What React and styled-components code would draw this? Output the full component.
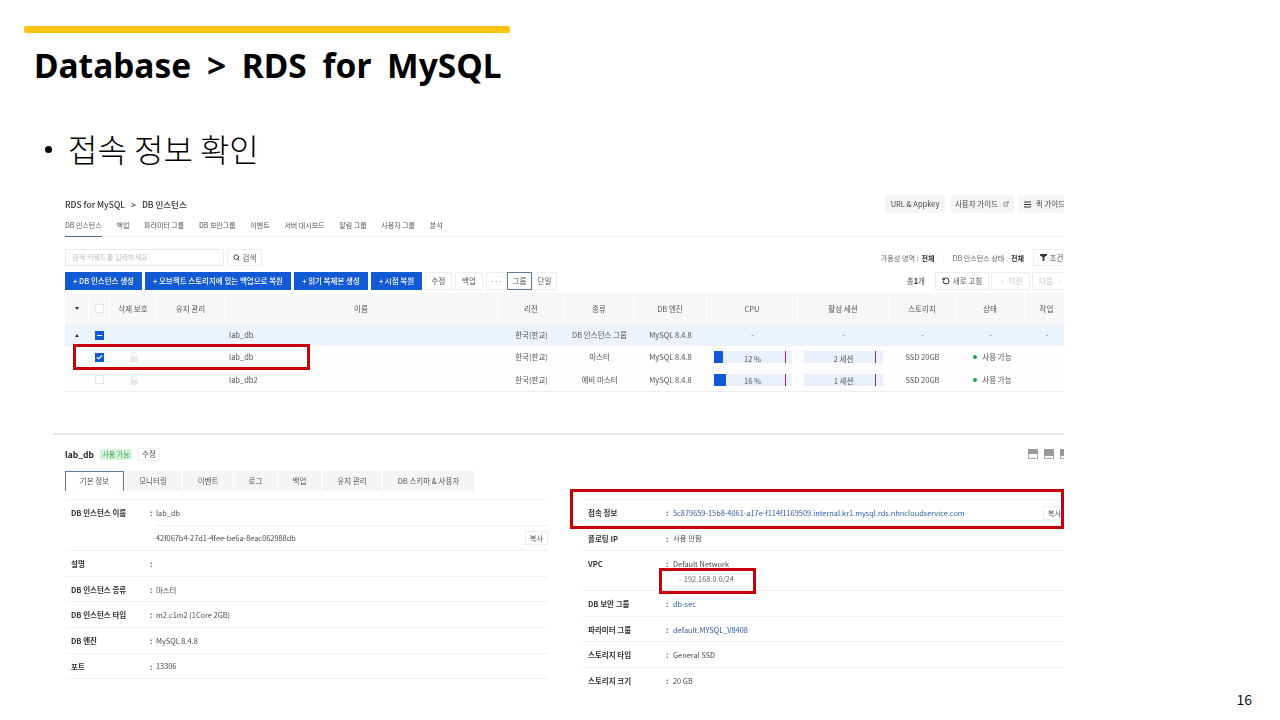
import React from 'react';
import styled, { createGlobalStyle } from 'styled-components';
import { Search, RotateCcw, ExternalLink, ChevronLeft, ChevronRight, Check, Minus } from 'lucide-react';

const GlobalStyle = createGlobalStyle`
  html, body {
    margin: 0;
    background: #fff;
  }
  * {
    box-sizing: border-box;
  }
`;

const KR = `"Noto Sans CJK KR", "Noto Sans", sans-serif`;

const Slide = styled.div`
  width: 1280px;
  height: 720px;
  overflow: hidden;
  display: flex;
  flex-direction: column;
  background: #fff;
  color: #000;
  font-family: ${KR};
`;

const AccentBar = styled.div`
  width: 486px;
  height: 7px;
  margin: 26px 0 0 24px;
  border-radius: 2px;
  background: #fdc20f;
`;

const Title = styled.h1`
  margin: 7px 0 0 34px;
  font-family: "Noto Sans", sans-serif;
  font-size: 33.5px;
  font-weight: 700;
  line-height: 50px;
  word-spacing: 7px;
  white-space: nowrap;
`;

const Bullet = styled.div`
  display: flex;
  align-items: center;
  margin: 36px 0 0 45px;
  height: 44px;
  font-size: 32px;
  font-weight: 300;
  gap: 16px;
  white-space: nowrap;
`;

const Dot = styled.span`
  width: 7px;
  height: 7px;
  border-radius: 50%;
  background: #000;
  margin-top: 2px;
`;

const Shot = styled.div`
  position: relative;
  width: 1011px;
  height: 498px;
  margin: 20px 0 0 53px;
  overflow: hidden;
  font-size: 7.5px;
  line-height: 12px;
  color: #555;
  filter: blur(0.4px);
`;

const PageNumber = styled.div`
  margin: 1px 28px 0 0;
  text-align: right;
  font-size: 14px;
  line-height: 20px;
  color: #111;
`;

const Console = styled.div`
  width: 1017px;
  padding: 5px 0 0 12px;
`;

const SpaceBetween = styled.div`
  display: flex;
  justify-content: space-between;
  align-items: center;
  height: ${p => p.$h || 18}px;
  margin-top: ${p => p.$mt || 0}px;
`;

const Breadcrumb = styled.div`
  display: flex;
  gap: 6px;
  font-size: 8.5px;
  font-weight: 500;
  color: #333;
`;

const Row = styled.div`
  display: flex;
  align-items: center;
  gap: ${p => p.$gap ?? 3}px;
`;

const GuideButton = styled.div`
  display: flex;
  align-items: center;
  justify-content: center;
  gap: 5px;
  width: ${p => p.$w}px;
  height: 18px;
  margin-left: ${p => p.$ml || 0}px;
  background: #f5f5f5;
  border-radius: 2px;
  color: #444;
`;

const NavTabs = styled.div`
  display: flex;
  gap: 14.7px;
  height: 19px;
  margin-top: 5px;
  font-size: 7px;
  border-bottom: 1px solid #f3f3f3;
`;

const NavTab = styled.div`
  height: 19px;
  line-height: 14px;
  color: #555;
  border-bottom: 1px solid ${p => (p.$active ? '#4d6f96' : 'transparent')};
`;

const SearchInput = styled.div`
  width: 159px;
  height: 17px;
  padding-left: 6px;
  border: 1px solid #eaeaea;
  font-size: 7.2px;
  line-height: 15px;
  color: #bbb;
`;

const Button = styled.div`
  display: flex;
  align-items: center;
  justify-content: center;
  gap: 3px;
  flex-shrink: 0;
  width: ${p => p.$w}px;
  height: ${p => p.$h || 18}px;
  margin-left: ${p => p.$ml || 0}px;
  background: #fff;
  border: 1px solid ${p => (p.$active ? '#5a7ba3' : '#eeeeee')};
  color: ${p => (p.$disabled ? '#c4c4c4' : '#555')};
`;

const PrimaryButton = styled.div`
  display: flex;
  align-items: center;
  justify-content: center;
  gap: 4px;
  width: ${p => p.$w}px;
  height: 18px;
  background: #1259d6;
  color: #fff;
  font-weight: 500;
`;

const FilterText = styled.div`
  display: flex;
  gap: 3px;
  font-size: 7.1px;
  color: #666;
  margin-right: 9px;
`;

const Strong = styled.b`
  color: #333;
  font-weight: 700;
`;

const Sep = styled.span`
  margin: 0 5px;
  color: #e4e4e4;
`;

const Count = styled.div`
  margin-right: 8px;
  color: #555;
`;

const Table = styled.div`
  margin-top: 3px;
  border-bottom: 1px solid #eeeeee;
`;

const TableRow = styled.div`
  display: grid;
  grid-template-columns: 24px 21px 47px 68px 273px 67px 69px 73px 91px 91px 67px 69px 44px;
  height: ${p => (p.$head ? 31 : 22.33)}px;
  background: ${p => p.$bg || '#fdfdfd'};
`;

const Cell = styled.div`
  display: flex;
  align-items: center;
  justify-content: ${p => (p.$left ? 'flex-start' : 'center')};
  padding-left: ${p => (p.$left ? 4 : 0)}px;
  border-right: ${p => (p.$head ? '1px solid #fff' : 'none')};
  white-space: nowrap;
  color: #555;
`;

const StatusCell = styled(Cell)`
  padding-left: 4px;
`;

const Caret = styled.span`
  width: 0;
  height: 0;
  border-left: 2.5px solid transparent;
  border-right: 2.5px solid transparent;
  border-top: ${p => (p.$up ? 'none' : '3px solid #333')};
  border-bottom: ${p => (p.$up ? '3px solid #333' : 'none')};
`;

const CheckBox = styled.span`
  display: flex;
  align-items: center;
  justify-content: center;
  width: 9px;
  height: 9px;
  background: ${p => (p.$on ? '#1259d6' : '#fff')};
  border: 1px solid ${p => (p.$on ? '#1259d6' : '#e6e6e6')};
  color: #fff;
`;

const Gauge = styled.div`
  position: relative;
  width: ${p => p.$w}px;
  height: 12px;
  display: flex;
  align-items: center;
  justify-content: center;
  background: #e9f0fb;
  color: #555;
`;

const GaugeFill = styled.span`
  position: absolute;
  left: 0;
  top: 0;
  bottom: 0;
  background: #1259d6;
`;

const GaugeMark = styled.span`
  position: absolute;
  top: 0;
  bottom: 0;
  left: 71px;
  width: 1px;
  background: #9c3046;
`;

const GaugeLabel = styled.span`
  margin-top: 3px;
`;

const StatusDot = styled.span`
  width: 4px;
  height: 4px;
  border-radius: 50%;
  background: #1f9d4d;
  margin-right: 5px;
`;

const Detail = styled.div`
  width: 1017px;
  margin-top: 41px;
  padding: 13px 0 0 12px;
  border-top: 2px solid #e6e6e6;
`;

const InstanceName = styled.div`
  font-size: 8.5px;
  font-weight: 700;
  color: #222;
  width: 35px;
`;

const Badge = styled.div`
  width: 32px;
  height: 11px;
  margin-right: 6px;
  line-height: 11px;
  text-align: center;
  font-size: 7.1px;
  background: #d9f2dd;
  color: #35a853;
`;

const WindowIcon = styled.svg`
  display: block;
  width: 10px;
  height: 10px;
`;

const DetailTabs = styled.div`
  display: flex;
  margin-top: 10px;
  height: 20px;
`;

const DetailTab = styled.div`
  display: flex;
  align-items: center;
  justify-content: center;
  width: ${p => p.$w}px;
  margin-right: ${p => p.$mr || 0}px;
  background: ${p => (p.$active ? '#fff' : '#f5f5f5')};
  border: ${p => (p.$active ? '1px solid #5a7ba3' : 'none')};
  border-bottom: none;
  color: #555;
`;

const Columns = styled.div`
  display: flex;
  gap: 35px;
  margin-top: 8px;
  align-items: flex-start;
`;

const Column = styled.div`
  flex-shrink: 0;
  width: ${p => p.$w}px;
`;

const Field = styled.div`
  display: grid;
  grid-template-columns: ${p => p.$label}px ${p => p.$colon}px 1fr;
  border-top: 1px solid ${p => (p.$noRule ? 'transparent' : '#f2f2f2')};
  border-bottom: ${p => (p.$last ? '1px solid #f2f2f2' : 'none')};
  min-height: 25.6px;
`;

const FieldLabel = styled.div`
  padding-left: ${p => p.$pad}px;
  height: 24.6px;
  line-height: 26px;
  font-weight: 700;
  color: #333;
`;

const FieldColon = styled.div`
  height: 24.6px;
  line-height: 26px;
  font-weight: 700;
  color: #555;
`;

const FieldValue = styled.div`
  display: flex;
  justify-content: space-between;
  align-items: ${p => (p.$stack ? 'flex-start' : 'center')};
  flex-direction: ${p => (p.$stack ? 'column' : 'row')};
  height: ${p => (p.$stack ? 'auto' : '24.6px')};
  padding-top: ${p => (p.$stack ? 0 : 1)}px;
  font-size: 7.38px;
  box-shadow: ${p => (p.$rule ? '0 -1px 0 #f2f2f2' : 'none')};
  color: ${p => (p.$link ? '#2a5aa8' : '#4a4a4a')};
  white-space: nowrap;
`;

const StackLine = styled.div`
  height: 24px;
  line-height: 26px;
`;

const SubLine = styled.div`
  line-height: 8px;
  padding: 0 0 7px 5px;
  color: #666;
`;

const CopyButton = styled.div`
  flex-shrink: 0;
  width: 23px;
  height: 14px;
  line-height: 12px;
  text-align: center;
  border: 1px solid #eeeeee;
  color: #555;
`;

const RedBox = styled.div`
  position: absolute;
  left: ${p => p.$left}px;
  top: ${p => p.$top}px;
  width: ${p => p.$w}px;
  height: ${p => p.$h}px;
  border: 3px solid #c8000a;
`;

const tabs = ['DB 인스턴스', '백업', '파라미터 그룹', 'DB 보안그룹', '이벤트', '서버 대시보드', '알림 그룹', '사용자 그룹', '분석'];
const headers = ['삭제 보호', '유지 관리', '이름', '리전', '종류', 'DB 엔진', 'CPU', '활성 세션', '스토리지', '상태', '작업'];
const detailTabs = [
  ['기본 정보', 59, 1],
  ['모니터링', 56, 2],
  ['이벤트', 50, 1],
  ['로그', 43, 1],
  ['백업', 43, 2],
  ['유지 관리', 58, 2],
  ['DB 스키마 & 사용자', 91, 0],
];

const LockIcon = () => (
  <svg width="8" height="10" viewBox="0 0 8 10">
    <path d="M2 5V2.6a2 2 0 0 1 4 0" fill="none" stroke="#e8e8e8" strokeWidth="1.2" />
    <rect x="0.5" y="4.5" width="7" height="5.5" fill="#e8e8e8" />
  </svg>
);

const PaneIcon = ({ fill }) => (
  <WindowIcon viewBox="0 0 10 10">
    <rect x="0.5" y="0.5" width="9" height="9" fill="#fff" stroke="#aaa" />
    <rect x="0" y="0" width="10" height={fill} fill="#999" />
  </WindowIcon>
);

const SidePaneIcon = () => (
  <WindowIcon viewBox="0 0 10 10">
    <rect x="0.5" y="0.5" width="9" height="9" fill="#fff" stroke="#aaa" />
    <rect x="0" y="0" width="4" height="7" fill="#999" />
  </WindowIcon>
);

const MenuIcon = () => (
  <svg width="7" height="7" viewBox="0 0 7 7">
    <path d="M0 1h7M0 3.5h7M0 6h7" stroke="#333" strokeWidth="1" />
  </svg>
);

const FunnelIcon = () => (
  <svg width="7" height="7" viewBox="0 0 7 7">
    <path d="M0 0h7v1.4L4.4 3V7H2.6V3L0 1.4z" fill="#333" />
  </svg>
);

const InstanceRow = ({ name, kind, checked, cpu, session }) => (
  <TableRow>
    <Cell />
    <Cell>
      <CheckBox $on={checked}>{checked && <Check size={7} strokeWidth={4} />}</CheckBox>
    </Cell>
    <Cell><LockIcon /></Cell>
    <Cell />
    <Cell $left>{name}</Cell>
    <Cell>한국(판교)</Cell>
    <Cell>{kind}</Cell>
    <Cell>MySQL 8.4.8</Cell>
    <Cell>
      <Gauge $w={78}>
        <GaugeFill style={{ width: cpu + '%' }} />
        <GaugeMark />
        <GaugeLabel>{cpu} %</GaugeLabel>
      </Gauge>
    </Cell>
    <Cell>
      <Gauge $w={79}>
        <GaugeMark />
        <GaugeLabel>{session} 세션</GaugeLabel>
      </Gauge>
    </Cell>
    <Cell>SSD 20GB</Cell>
    <StatusCell><StatusDot />사용 가능</StatusCell>
    <Cell />
  </TableRow>
);

const App = () => (
  <Slide>
    <GlobalStyle />
    <AccentBar />
    <Title>Database &gt; RDS for MySQL</Title>
    <Bullet>
      <Dot />
      <span>접속 정보 확인</span>
    </Bullet>

    <Shot>
      <Console>
        <SpaceBetween>
          <Breadcrumb>
            <span>RDS for MySQL</span>
            <span>&gt;</span>
            <span>DB 인스턴스</span>
          </Breadcrumb>
          <Row $gap={0}>
            <GuideButton $w={60}>URL &amp; Appkey</GuideButton>
            <GuideButton $w={64} $ml={5}>사용자 가이드 <ExternalLink size={6} /></GuideButton>
            <GuideButton $w={51} $ml={5}><MenuIcon /> 퀵 가이드</GuideButton>
          </Row>
        </SpaceBetween>

        <NavTabs>
          {tabs.map((t, i) => (
            <NavTab key={t} $active={i === 0}>{t}</NavTab>
          ))}
        </NavTabs>

        <SpaceBetween $h={17} $mt={12}>
          <Row>
            <SearchInput>검색 키워드를 입력하세요.</SearchInput>
            <Button $w={35} $h={17}><Search size={7} strokeWidth={3} color="#333" /> 검색</Button>
          </Row>
          <Row $gap={0}>
            <FilterText>
              가용성 영역 : <Strong>전체</Strong><Sep>|</Sep>DB 인스턴스 상태 : <Strong>전체</Strong>
            </FilterText>
            <Button $w={37} $h={17}><FunnelIcon /> 조건</Button>
          </Row>
        </SpaceBetween>

        <SpaceBetween $mt={6}>
          <Row>
            <PrimaryButton $w={77}>+ DB 인스턴스 생성</PrimaryButton>
            <PrimaryButton $w={146}>+ 오브젝트 스토리지에 있는 백업으로 복원</PrimaryButton>
            <PrimaryButton $w={74}>+ 읽기 복제본 생성</PrimaryButton>
            <PrimaryButton $w={51}>+ 시점 복원</PrimaryButton>
            <Button $w={27}>수정</Button>
            <Button $w={28}>백업</Button>
            <Button $w={20}>···</Button>
            <Button $w={25} $ml={-2} $active>그룹</Button>
            <Button $w={25} $ml={-3}>단일</Button>
          </Row>
          <Row $gap={2}>
            <Count>총<Strong>1</Strong>개</Count>
            <Button $w={54}><RotateCcw size={8} strokeWidth={3} color="#333" /> 새로 고침</Button>
            <Button $w={39} $disabled><ChevronLeft size={7} /> 이전</Button>
            <Button $w={38} $disabled>다음 <ChevronRight size={7} /></Button>
          </Row>
        </SpaceBetween>

        <Table>
          <TableRow $head $bg="#f7f7f7">
            <Cell $head><Caret /></Cell>
            <Cell $head><CheckBox /></Cell>
            {headers.map(h => (
              <Cell $head key={h}>{h}</Cell>
            ))}
          </TableRow>
          <TableRow $bg="#edf3fc">
            <Cell><Caret $up /></Cell>
            <Cell>
              <CheckBox $on><Minus size={7} strokeWidth={4} /></CheckBox>
            </Cell>
            <Cell />
            <Cell />
            <Cell $left>lab_db</Cell>
            <Cell>한국(판교)</Cell>
            <Cell>DB 인스턴스 그룹</Cell>
            <Cell>MySQL 8.4.8</Cell>
            <Cell>-</Cell>
            <Cell>-</Cell>
            <Cell>-</Cell>
            <Cell>-</Cell>
            <Cell>-</Cell>
          </TableRow>
          <InstanceRow name="lab_db" kind="마스터" checked cpu={12} session={2} />
          <InstanceRow name="lab_db2" kind="예비 마스터" cpu={16} session={1} />
        </Table>
      </Console>

      <Detail>
        <SpaceBetween $h={13}>
          <Row $gap={0}>
            <InstanceName>lab_db</InstanceName>
            <Badge>사용 가능</Badge>
            <Button $w={22} $h={13}>수정</Button>
          </Row>
          <Row $gap={6}>
            <PaneIcon fill={5} />
            <PaneIcon fill={7} />
            <SidePaneIcon />
          </Row>
        </SpaceBetween>

        <DetailTabs>
          {detailTabs.map(([label, w, mr], i) => (
            <DetailTab key={label} $w={w} $mr={mr} $active={i === 0}>{label}</DetailTab>
          ))}
        </DetailTabs>

        <Columns>
          <Column $w={483}>
            <Field $label={85} $colon={6}>
              <FieldLabel $pad={6}>DB 인스턴스 이름</FieldLabel>
              <FieldColon>:</FieldColon>
              <FieldValue>lab_db</FieldValue>
            </Field>
            <Field $label={85} $colon={6} $noRule>
              <FieldLabel $pad={6} />
              <FieldColon />
              <FieldValue $rule>
                42f067b4-27d1-4fee-be6a-8eac062988db
                <CopyButton>복사</CopyButton>
              </FieldValue>
            </Field>
            <Field $label={85} $colon={6}>
              <FieldLabel $pad={6}>설명</FieldLabel>
              <FieldColon>:</FieldColon>
              <FieldValue />
            </Field>
            <Field $label={85} $colon={6}>
              <FieldLabel $pad={6}>DB 인스턴스 종류</FieldLabel>
              <FieldColon>:</FieldColon>
              <FieldValue>마스터</FieldValue>
            </Field>
            <Field $label={85} $colon={6}>
              <FieldLabel $pad={6}>DB 인스턴스 타입</FieldLabel>
              <FieldColon>:</FieldColon>
              <FieldValue>m2.c1m2 (1Core 2GB)</FieldValue>
            </Field>
            <Field $label={85} $colon={6}>
              <FieldLabel $pad={6}>DB 엔진</FieldLabel>
              <FieldColon>:</FieldColon>
              <FieldValue>MySQL 8.4.8</FieldValue>
            </Field>
            <Field $label={85} $colon={6} $last>
              <FieldLabel $pad={6}>포트</FieldLabel>
              <FieldColon>:</FieldColon>
              <FieldValue>13306</FieldValue>
            </Field>
          </Column>

          <Column $w={483}>
            <Field $label={83} $colon={7}>
              <FieldLabel $pad={5}>접속 정보</FieldLabel>
              <FieldColon>:</FieldColon>
              <FieldValue $link>
                5c879659-15b8-4061-a17e-f114f1169509.internal.kr1.mysql.rds.nhncloudservice.com
                <CopyButton>복사</CopyButton>
              </FieldValue>
            </Field>
            <Field $label={83} $colon={7}>
              <FieldLabel $pad={5}>플로팅 IP</FieldLabel>
              <FieldColon>:</FieldColon>
              <FieldValue>사용 안함</FieldValue>
            </Field>
            <Field $label={83} $colon={7}>
              <FieldLabel $pad={5}>VPC</FieldLabel>
              <FieldColon>:</FieldColon>
              <FieldValue $stack>
                <StackLine>Default Network</StackLine>
                <SubLine>· 192.168.0.0/24</SubLine>
              </FieldValue>
            </Field>
            <Field $label={83} $colon={7}>
              <FieldLabel $pad={5}>DB 보안 그룹</FieldLabel>
              <FieldColon>:</FieldColon>
              <FieldValue $link>db-sec</FieldValue>
            </Field>
            <Field $label={83} $colon={7}>
              <FieldLabel $pad={5}>파라미터 그룹</FieldLabel>
              <FieldColon>:</FieldColon>
              <FieldValue $link>default.MYSQL_V8408</FieldValue>
            </Field>
            <Field $label={83} $colon={7}>
              <FieldLabel $pad={5}>스토리지 타입</FieldLabel>
              <FieldColon>:</FieldColon>
              <FieldValue>General SSD</FieldValue>
            </Field>
            <Field $label={83} $colon={7}>
              <FieldLabel $pad={5}>스토리지 크기</FieldLabel>
              <FieldColon>:</FieldColon>
              <FieldValue>20 GB</FieldValue>
            </Field>
          </Column>
        </Columns>
      </Detail>

      <RedBox $left={20} $top={154} $w={237} $h={26} />
      <RedBox $left={517} $top={299} $w={494} $h={40} />
      <RedBox $left={606} $top={378} $w={97} $h={26} />
    </Shot>

    <PageNumber>16</PageNumber>
  </Slide>
);

export default App;
